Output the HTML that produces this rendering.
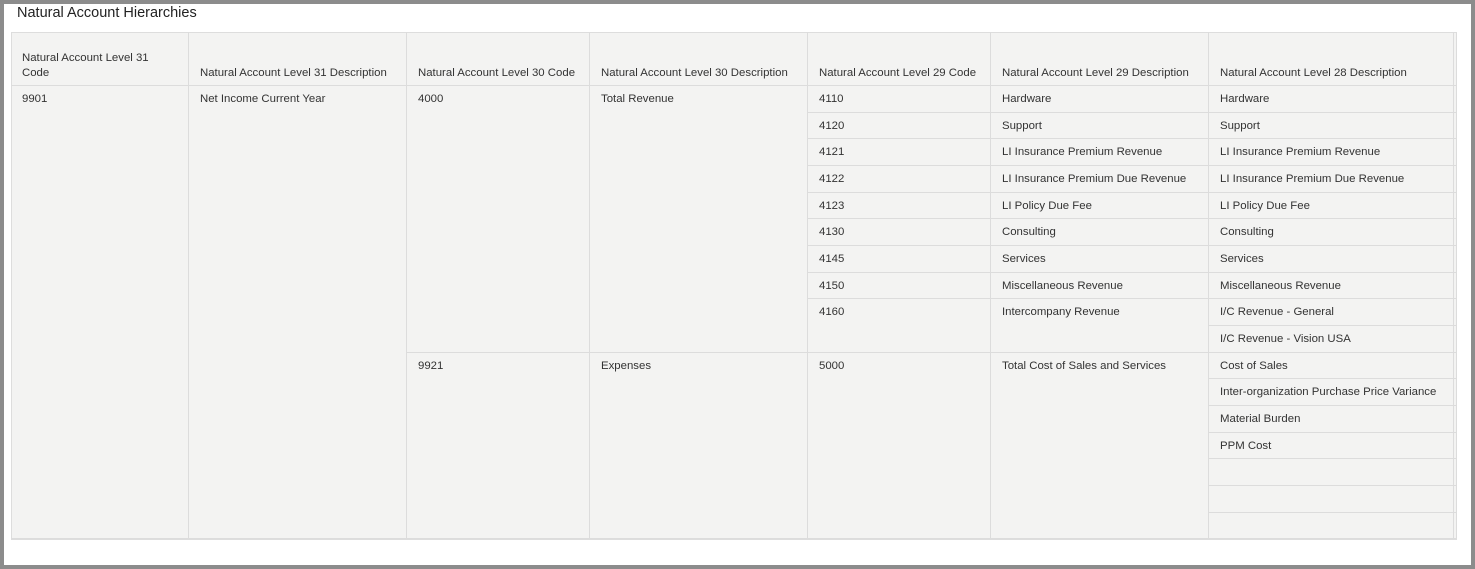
<!DOCTYPE html>
<html><head><meta charset="utf-8"><style>
body{margin:0;width:1475px;height:569px;overflow:hidden;background:#fff;font-family:"Liberation Sans",sans-serif;}
.frame{position:absolute;left:0;top:0;width:1467px;height:561px;border:4px solid #8c8c8c;background:#fff;}
.title{position:absolute;left:17px;top:5px;font-size:14.5px;color:#222;}
.tbl{position:absolute;left:11px;top:32px;width:1446px;height:508px;background:#f3f3f2;border:1px solid #ddd;box-sizing:border-box;}
.c{position:absolute;box-sizing:border-box;border-right:1px solid #dcdcdc;border-bottom:1px solid #dcdcdc;font-size:11.4px;color:#333;padding:7px 0 0 11px;white-space:nowrap;overflow:hidden;}
.h{position:absolute;font-size:11.4px;color:#333;box-sizing:border-box;padding-left:11px;line-height:15px;white-space:nowrap;}
</style></head><body>
<div class="frame"></div>
<div class="title">Natural Account Hierarchies</div>
<div class="tbl"></div>
<div id="g"></div>
<script>
const cols=[11,189,407,590,808,991,1209,1454,1457];
const top0=86,rh=26.67,N=17;
let html='';
const heads=["Natural Account Level 31<br>Code","Natural Account Level 31 Description","Natural Account Level 30 Code","Natural Account Level 30 Description","Natural Account Level 29 Code","Natural Account Level 29 Description","Natural Account Level 28 Description",""];
for(let i=0;i<8;i++){
 html+=`<div class="c" style="left:${cols[i]}px;top:32px;width:${cols[i+1]-cols[i]}px;height:54px;padding:0"></div>`;
 const two=i==0;
 html+=`<div class="h" style="left:${cols[i]}px;top:${two?51:66}px;width:${cols[i+1]-cols[i]}px">${heads[i]}</div>`;
}
function cell(ci,r0,r1,t){
 const y=top0+r0*rh,h=(r1-r0+1)*rh;
 const pad=ci==7?'padding:0;':'';
 html+=`<div class="c" style="${pad}left:${cols[ci]}px;top:${y}px;width:${cols[ci+1]-cols[ci]}px;height:${h}px">${t||''}</div>`;
}
cell(0,0,16,'9901');cell(1,0,16,'Net Income Current Year');
cell(2,0,9,'4000');cell(3,0,9,'Total Revenue');cell(2,10,16,'9921');cell(3,10,16,'Expenses');
const c29=[['4110','Hardware'],['4120','Support'],['4121','LI Insurance Premium Revenue'],['4122','LI Insurance Premium Due Revenue'],['4123','LI Policy Due Fee'],['4130','Consulting'],['4145','Services'],['4150','Miscellaneous Revenue']];
c29.forEach((v,i)=>{cell(4,i,i,v[0]);cell(5,i,i,v[1]);});
cell(4,8,9,'4160');cell(5,8,9,'Intercompany Revenue');
cell(4,10,16,'5000');cell(5,10,16,'Total Cost of Sales and Services');
const c28=['Hardware','Support','LI Insurance Premium Revenue','LI Insurance Premium Due Revenue','LI Policy Due Fee','Consulting','Services','Miscellaneous Revenue','I/C Revenue - General','I/C Revenue - Vision USA','Cost of Sales','Inter-organization Purchase Price Variance','Material Burden','PPM Cost'];
for(let i=0;i<N;i++){cell(6,i,i,c28[i]||'');cell(7,i,i,'');}
document.getElementById('g').innerHTML=html;
</script>
</body></html>
